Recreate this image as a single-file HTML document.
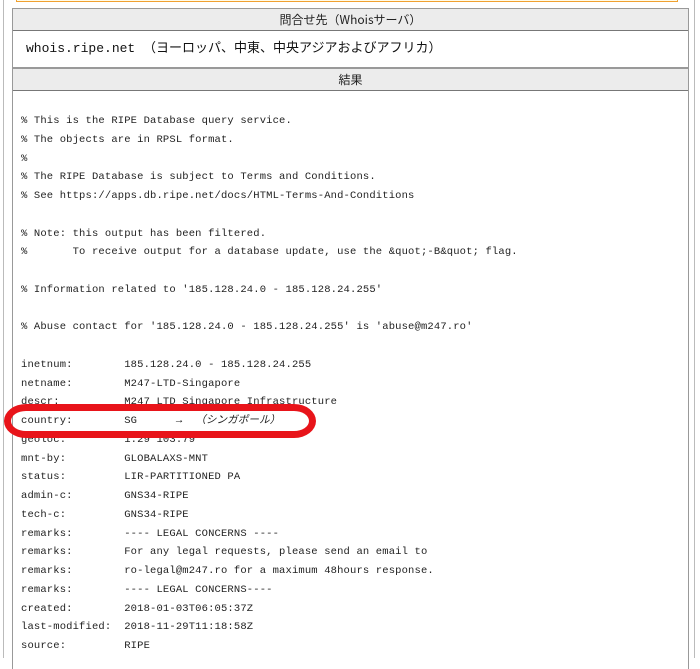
<!DOCTYPE html>
<html><head><meta charset="utf-8"><style>
body{margin:0;width:700px;height:658px;overflow:hidden;background:#fff;position:relative;font-family:"Liberation Sans","Noto Sans CJK JP",sans-serif;}
.ol{position:absolute;left:3px;top:0;width:1px;height:658px;background:#bbb}
.or{position:absolute;left:694px;top:0;width:1px;height:658px;background:#bbb}
.org{position:absolute;left:16px;top:-4px;width:660px;height:5px;border:1px solid #f0a030;border-top:none;background:#fffbe8}
.tbl{position:absolute;left:12px;top:8px;width:675px;height:660px;border:1px solid #999;border-bottom:none}
.h{background:#ececec;text-align:center;font-size:12px;height:21px;line-height:21px;border-bottom:1px solid #777;color:#222;font-family:"Noto Sans CJK JP",sans-serif}
.w{height:36px;line-height:36px;font-size:13px;padding-left:13px;border-bottom:1px solid #999;font-family:"Liberation Mono","Noto Sans CJK JP",monospace;color:#111}
pre{margin:0;position:absolute;left:8px;top:103px;font-family:"Liberation Mono","Noto Sans CJK JP",monospace;font-size:10.5px;line-height:18.75px;color:#222;letter-spacing:0.15px}
.el{position:absolute;left:4px;top:404px;width:298px;height:20px;border:7px solid #e8141a;border-radius:22px/17px}
</style></head><body>
<div class="ol"></div><div class="or"></div>
<div class="org"></div>
<div class="tbl">
<div class="h">問合せ先（Whoisサーバ）</div>
<div class="w">whois.ripe.net （ヨーロッパ、中東、中央アジアおよびアフリカ）</div>
<div class="h" style="border-top:1px solid #999">結果</div>
<pre>% This is the RIPE Database query service.
% The objects are in RPSL format.
%
% The RIPE Database is subject to Terms and Conditions.
% See https://apps.db.ripe.net/docs/HTML-Terms-And-Conditions

% Note: this output has been filtered.
%       To receive output for a database update, use the &amp;quot;-B&amp;quot; flag.

% Information related to '185.128.24.0 - 185.128.24.255'

% Abuse contact for '185.128.24.0 - 185.128.24.255' is 'abuse@m247.ro'

inetnum:        185.128.24.0 - 185.128.24.255
netname:        M247-LTD-Singapore
descr:          M247 LTD Singapore Infrastructure
country:        SG      →  <i>（シンガポール）</i>
geoloc:         1.29 103.79
mnt-by:         GLOBALAXS-MNT
status:         LIR-PARTITIONED PA
admin-c:        GNS34-RIPE
tech-c:         GNS34-RIPE
remarks:        ---- LEGAL CONCERNS ----
remarks:        For any legal requests, please send an email to
remarks:        ro-legal@m247.ro for a maximum 48hours response.
remarks:        ---- LEGAL CONCERNS----
created:        2018-01-03T06:05:37Z
last-modified:  2018-11-29T11:18:58Z
source:         RIPE</pre>
</div>
<div class="el"></div>
</body></html>
